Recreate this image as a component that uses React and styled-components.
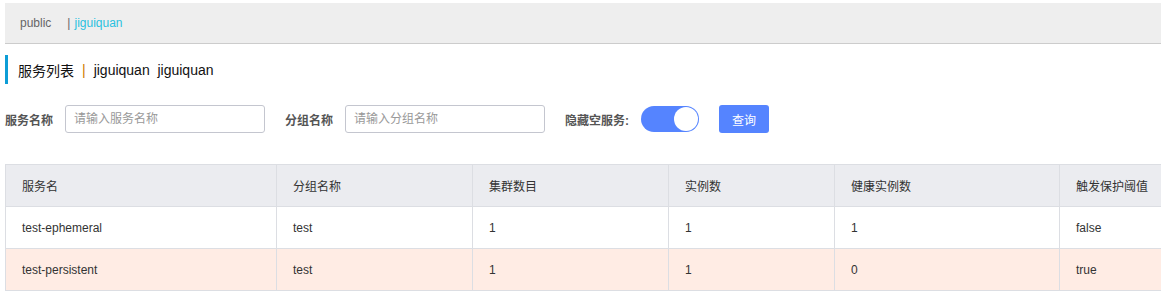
import { styled, createGlobalStyle } from "styled-components";

const GlobalStyle = createGlobalStyle`
  body {
    margin: 0;
    background: #fff;
    font-family: "Liberation Sans", "Noto Sans CJK SC", sans-serif;
    font-size: 12px;
    color: #333;
  }
`;

const columns = [
  { title: "服务名", key: "name", width: 271 },
  { title: "分组名称", key: "group", width: 196 },
  { title: "集群数目", key: "clusters", width: 196 },
  { title: "实例数", key: "instances", width: 166 },
  { title: "健康实例数", key: "healthy", width: 225 },
  { title: "触发保护阈值", key: "protect", width: 200 },
];

const rows = [
  { name: "test-ephemeral", group: "test", clusters: 1, instances: 1, healthy: 1, protect: "false" },
  { name: "test-persistent", group: "test", clusters: 1, instances: 1, healthy: 0, protect: "true", warn: true },
];

const App = () => {
  return (
    <StPage>
      <GlobalStyle />
      <StNamespaceBar>
        <StNs>public</StNs>
        <StSep>|</StSep>
        <StNs $active>jiguiquan</StNs>
      </StNamespaceBar>
      <StTitle>
        服务列表<StTitleSep>|</StTitleSep>jiguiquan&nbsp;&nbsp;jiguiquan
      </StTitle>
      <StForm>
        <StLabel>服务名称</StLabel>
        <StInput placeholder="请输入服务名称" />
        <StLabel $gap>分组名称</StLabel>
        <StInput placeholder="请输入分组名称" />
        <StLabel $gap>隐藏空服务:</StLabel>
        <StSwitch>
          <StKnob />
        </StSwitch>
        <StBtn>查询</StBtn>
      </StForm>
      <StTableWrap>
        <StTable>
          <thead>
            <tr>
              {columns.map((c) => (
                <StTh key={c.key} style={{ width: c.width }}>
                  {c.title}
                </StTh>
              ))}
            </tr>
          </thead>
          <tbody>
            {rows.map((r) => (
              <StTr key={r.name} $warn={r.warn}>
                {columns.map((c) => (
                  <StTd key={c.key}>{r[c.key]}</StTd>
                ))}
              </StTr>
            ))}
          </tbody>
        </StTable>
      </StTableWrap>
    </StPage>
  );
};

export default App;

const StPage = styled.div`
  padding: 3px 0 0 5px;
  width: 1156px;
  overflow: hidden;
`;
const StNamespaceBar = styled.div`
  display: flex;
  align-items: center;
  height: 40px;
  padding-left: 15px;
  background-color: #eee;
  border-bottom: 1px solid #ccc;
`;
const StNs = styled.span`
  color: ${(p) => (p.$active ? "#2ac1e0" : "#666")};
  cursor: pointer;
`;
const StSep = styled.span`
  color: #666;
  margin: 0 4px 0 16px;
`;
const StTitle = styled.div`
  display: flex;
  align-items: center;
  margin-top: 11px;
  height: 29px;
  padding-left: 10px;
  border-left: 3px solid #0d9dd6;
  font-size: 14px;
  color: #111;
`;
const StTitleSep = styled.span`
  margin: 0 8px;
  color: #cc7a00;
`;
const StForm = styled.div`
  display: flex;
  align-items: center;
  margin-top: 21px;
  height: 28px;
`;
const StLabel = styled.label`
  font-weight: 700;
  color: #555;
  margin-left: ${(p) => (p.$gap ? "20px" : "0")};
  margin-right: 12px;
`;
const StInput = styled.input`
  box-sizing: border-box;
  width: 200px;
  height: 28px;
  padding: 0 8px;
  border: 1px solid #c4c6cf;
  border-radius: 3px;
  font-family: inherit;
  font-size: 12px;
  color: #333;
  outline: none;

  &::placeholder {
    color: #999;
  }
`;
const StSwitch = styled.div`
  box-sizing: border-box;
  display: flex;
  justify-content: flex-end;
  align-items: center;
  width: 58px;
  height: 26px;
  padding: 1px;
  background-color: #5584ff;
  border-radius: 13px;
`;
const StKnob = styled.div`
  width: 24px;
  height: 24px;
  border-radius: 50%;
  background-color: #fff;
`;
const StBtn = styled.button`
  margin-left: 20px;
  width: 50px;
  height: 28px;
  border: none;
  border-radius: 3px;
  background-color: #5584ff;
  color: #fff;
  font-family: inherit;
  font-size: 12px;
`;
const StTableWrap = styled.div`
  margin-top: 31px;
`;
const StTable = styled.table`
  border-collapse: collapse;
  table-layout: fixed;
  width: 1254px;
  border-top: 1px solid #dcdee3;
  border-left: 1px solid #dcdee3;
`;
const StTh = styled.th`
  box-sizing: border-box;
  height: 42px;
  padding: 0 16px;
  text-align: left;
  font-weight: 400;
  color: #333;
  background-color: #ebecf0;
  border-right: 1px solid #dcdee3;
  border-bottom: 1px solid #dcdee3;
`;
const StTr = styled.tr`
  background-color: ${(p) => (p.$warn ? "#ffece4" : "#fff")};
`;
const StTd = styled.td`
  box-sizing: border-box;
  height: 42px;
  padding: 0 16px;
  color: #333;
  border-right: 1px solid #dcdee3;
  border-bottom: 1px solid #dcdee3;
`;
